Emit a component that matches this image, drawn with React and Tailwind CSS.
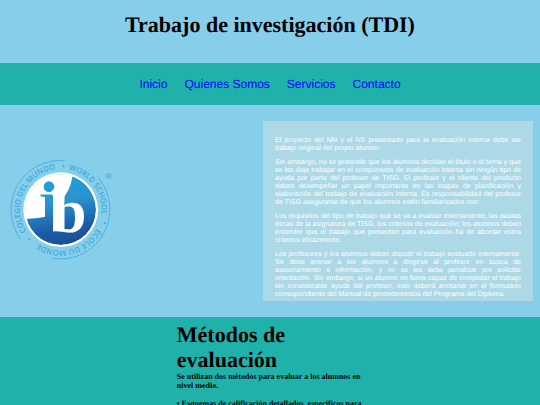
const links = ['Inicio', 'Quienes Somos', 'Servicios', 'Contacto']

const paragraphs = [
  'El proyecto del NM y el NS presentado para la evaluación interna debe ser trabajo original del propio alumno.',
  'Sin embargo, no se pretende que los alumnos decidan el título o el tema y que se les deje trabajar en el componente de evaluación interna sin ningún tipo de ayuda por parte del profesor de TISG. El profesor y el cliente del producto deben desempeñar un papel importante en las etapas de planificación y elaboración del trabajo de evaluación interna. Es responsabilidad del profesor de TISG asegurarse de que los alumnos estén familiarizados con:',
  'Los requisitos del tipo de trabajo que se va a evaluar internamente, las pautas éticas de la asignatura de TISG, los criterios de evaluación; los alumnos deben entender que el trabajo que presenten para evaluación ha de abordar estos criterios eficazmente.',
  'Los profesores y los alumnos deben discutir el trabajo evaluado internamente. Se debe animar a los alumnos a dirigirse al profesor en busca de asesoramiento e información, y no se les debe penalizar por solicitar orientación. Sin embargo, si un alumno no fuera capaz de completar el trabajo sin considerable ayuda del profesor, esto deberá anotarse en el formulario correspondiente del Manual de procedimientos del Programa del Diploma.',
]

function Logo() {
  return (
    <svg viewBox="30 54 312 318" className="w-[104px] h-[106px] shrink-0" role="img" aria-label="Colegio del Mundo IB">
      <defs>
        <linearGradient id="disc" gradientUnits="userSpaceOnUse" x1="150" y1="100" x2="195" y2="320">
          <stop offset="0" stopColor="#1ba3dc" />
          <stop offset="0.4" stopColor="#2b93cf" />
          <stop offset="0.75" stopColor="#1c5da8" />
          <stop offset="1" stopColor="#1b4c92" />
        </linearGradient>
        <clipPath id="inside">
          <circle cx="182" cy="209" r="106" />
        </clipPath>
        {/* Starts at the lower left dot and runs clockwise */}
        <path id="ring" d="M93 293A122 122 0 0 1 271 125A122 122 0 0 1 93 293" />
      </defs>

      {/* Outer arcs */}
      <g fill="none" stroke="#45b4e2" strokeWidth="3">
        <path d="M61 296A148 148 0 0 1 194 62" />
        <path d="M296 115A148 148 0 0 1 158 355" />
      </g>

      <g fill="#3fa9da" fontFamily="'Open Sans', sans-serif" fontSize="23" fontWeight="600" textAnchor="middle">
        <text><textPath href="#ring" startOffset="19%">COLEGIO DEL MUNDO</textPath></text>
        <text><textPath href="#ring" startOffset="52%">WORLD SCHOOL</textPath></text>
        <text><textPath href="#ring" startOffset="83%">ÉCOLE DU MONDE</textPath></text>
      </g>
      <g fill="#3fa9da">
        <circle cx="88" cy="298" r="3" />
        <circle cx="190" cy="79" r="3" />
        <circle cx="315" cy="250" r="3" />
      </g>

      <circle cx="182" cy="209" r="112" fill="#fff" />
      <g clipPath="url(#inside)">
        <circle cx="182" cy="209" r="106" fill="url(#disc)" />
        <path d="M60 237Q115 237 160 225V195L178 186Q212 156 218 106L150 90L60 120Z" fill="#fff" />
        <circle cx="147" cy="140" r="16" fill="url(#disc)" />
        <rect x="135" y="168" width="24" height="100" fill="url(#disc)" />
        <text x="113" y="277" fill="url(#disc)" fontFamily="'Liberation Serif', serif" fontSize="245">ı</text>
        <rect x="159" y="150" width="21" height="124" fill="#fff" />
        <text x="156" y="277" fill="#fff" fontFamily="'Liberation Serif', serif" fontSize="186" fontWeight="700">b</text>
      </g>

      <text x="326" y="116" textAnchor="middle" fill="#3fa9da" fontFamily="'Open Sans', sans-serif" fontSize="24" fontWeight="600">®</text>
    </svg>
  )
}

export default function App() {
  return (
    <div className="h-screen overflow-hidden bg-[#20b2aa] font-['Liberation_Serif',serif] text-black [text-rendering:geometricPrecision]">
      <header className="bg-[#87ceeb] pt-3 pb-[25px] text-center">
        <h1 className="text-[22px] leading-[26px] font-bold">Trabajo de investigación (TDI)</h1>
      </header>

      <nav className="flex justify-center gap-[17px] py-3 font-['Liberation_Sans',sans-serif] text-[12px] leading-[18px]">
        {links.map((link) => (
          <a key={link} href="#" className="text-[#0000ff]">{link}</a>
        ))}
      </nav>

      <main className="flex items-center justify-between bg-[#87ceeb] py-4 pr-[7px] pl-[10px]">
        <Logo />
        <section className="w-[50vw] bg-[#add8e6] px-3 pt-4 pb-[2px] font-['Liberation_Sans',sans-serif] text-[7px] leading-[8px] text-white text-justify space-y-[6px]">
          {paragraphs.map((text, i) => (
            <p key={i}>{text}</p>
          ))}
        </section>
      </main>

      <section className="mx-auto w-[36%] px-1 pt-[5px]">
        <h2 className="text-[22px] leading-[25px] font-bold">Métodos de evaluación</h2>
        <div className="text-[8px] leading-[9px] font-bold space-y-[9px]">
          <p>Se utilizan dos métodos para evaluar a los alumnos en nivel medio.</p>
          <p>• Esquemas de calificación detallados, específicos para</p>
        </div>
      </section>
    </div>
  )
}
